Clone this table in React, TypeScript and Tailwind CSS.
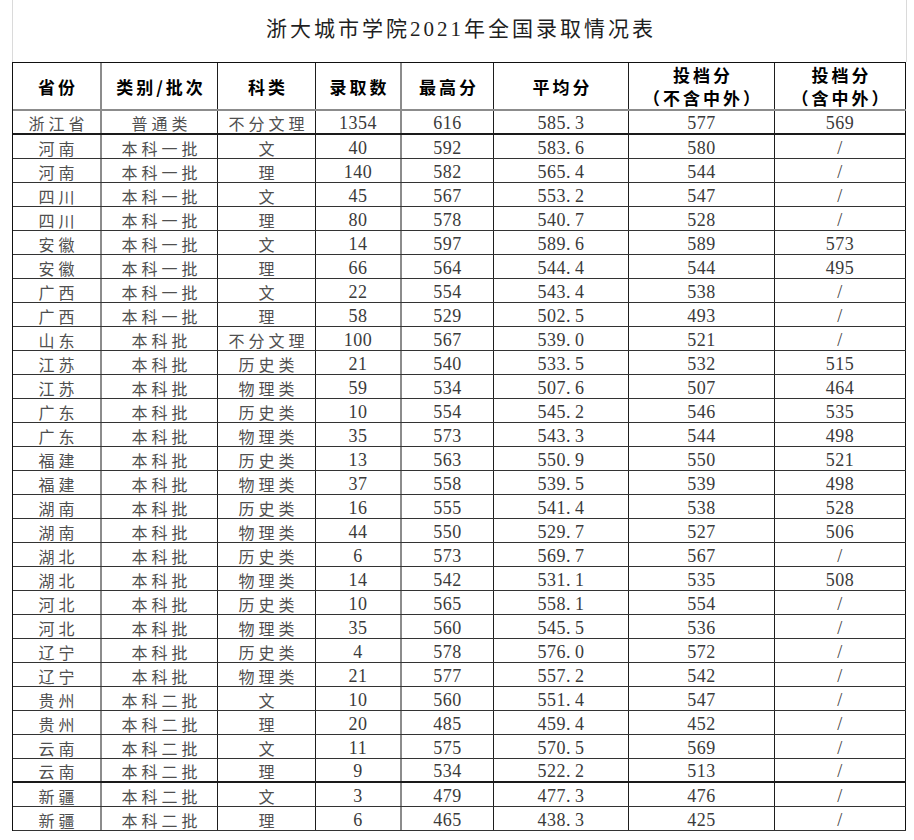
import type { ReactNode } from "react";

type Row = [string, string, string, string, string, string, string, string];

const ROWS: Row[] = [
  ["浙江省", "普通类", "不分文理", "1354", "616", "585.3", "577", "569"],
  ["河南", "本科一批", "文", "40", "592", "583.6", "580", "/"],
  ["河南", "本科一批", "理", "140", "582", "565.4", "544", "/"],
  ["四川", "本科一批", "文", "45", "567", "553.2", "547", "/"],
  ["四川", "本科一批", "理", "80", "578", "540.7", "528", "/"],
  ["安徽", "本科一批", "文", "14", "597", "589.6", "589", "573"],
  ["安徽", "本科一批", "理", "66", "564", "544.4", "544", "495"],
  ["广西", "本科一批", "文", "22", "554", "543.4", "538", "/"],
  ["广西", "本科一批", "理", "58", "529", "502.5", "493", "/"],
  ["山东", "本科批", "不分文理", "100", "567", "539.0", "521", "/"],
  ["江苏", "本科批", "历史类", "21", "540", "533.5", "532", "515"],
  ["江苏", "本科批", "物理类", "59", "534", "507.6", "507", "464"],
  ["广东", "本科批", "历史类", "10", "554", "545.2", "546", "535"],
  ["广东", "本科批", "物理类", "35", "573", "543.3", "544", "498"],
  ["福建", "本科批", "历史类", "13", "563", "550.9", "550", "521"],
  ["福建", "本科批", "物理类", "37", "558", "539.5", "539", "498"],
  ["湖南", "本科批", "历史类", "16", "555", "541.4", "538", "528"],
  ["湖南", "本科批", "物理类", "44", "550", "529.7", "527", "506"],
  ["湖北", "本科批", "历史类", "6", "573", "569.7", "567", "/"],
  ["湖北", "本科批", "物理类", "14", "542", "531.1", "535", "508"],
  ["河北", "本科批", "历史类", "10", "565", "558.1", "554", "/"],
  ["河北", "本科批", "物理类", "35", "560", "545.5", "536", "/"],
  ["辽宁", "本科批", "历史类", "4", "578", "576.0", "572", "/"],
  ["辽宁", "本科批", "物理类", "21", "577", "557.2", "542", "/"],
  ["贵州", "本科二批", "文", "10", "560", "551.4", "547", "/"],
  ["贵州", "本科二批", "理", "20", "485", "459.4", "452", "/"],
  ["云南", "本科二批", "文", "11", "575", "570.5", "569", "/"],
  ["云南", "本科二批", "理", "9", "534", "522.2", "513", "/"],
  ["新疆", "本科二批", "文", "3", "479", "477.3", "476", "/"],
  ["新疆", "本科二批", "理", "6", "465", "438.3", "425", "/"],
];

const GRID = "grid grid-cols-[89px_116px_98px_86px_92px_135px_146px_131px]";

// column dividers: the 1st and 4th print grey and a bit heavier
const COL_BORDER = [
  "border-r-2 border-r-[#8c8c8c]",
  "border-r border-r-[#1e1e1e]",
  "border-r border-r-[#1e1e1e]",
  "border-r-2 border-r-[#8c8c8c]",
  "border-r border-r-[#1e1e1e]",
  "border-r border-r-[#1e1e1e]",
  "border-r border-r-[#1e1e1e]",
  "border-r border-r-[#111]",
];

const CJK = "font-['Noto_Sans_CJK_SC',sans-serif]";
const NUM = "font-['Liberation_Serif','Noto_Sans_CJK_SC',serif]";

function Num({ value }: { value: string }) {
  const [int, dec] = value.split(".");
  if (dec === undefined) return <>{value}</>;
  return (
    <>
      {int}
      <span className="inline-block w-[9px] text-left">.</span>
      {dec}
    </>
  );
}

function HeadCell({ col, children }: { col: number; children: ReactNode }) {
  return (
    <div
      className={`${COL_BORDER[col]} flex flex-col items-center justify-center pl-[3px] text-[17px] font-bold leading-[23px] tracking-[3px] text-black ${CJK}`}
    >
      {children}
    </div>
  );
}

function DataRow({ row, index }: { row: Row; index: number }) {
  const thick = index === 0 || index === 27;
  return (
    <div
      className={`${GRID} h-[24px] ${thick ? "border-b-2 border-b-[#1a1a1a]" : "border-b border-b-[#333]"}`}
    >
      {row.map((cell, col) => {
        const isText = col < 3;
        return (
          <div
            key={col}
            className={`${COL_BORDER[col]} flex items-center justify-center pt-[2px] leading-none ${
              isText
                ? `${CJK} pl-[4px] text-[16px] tracking-[4px] text-[#505050]`
                : `${NUM} text-[18px] tracking-[0.5px] text-[#3a3a3a]`
            }`}
          >
            {isText ? cell : <Num value={cell} />}
          </div>
        );
      })}
    </div>
  );
}

export default function App() {
  return (
    <div className="min-h-[840px] w-[914px] bg-white pl-[12px]">
      <div className="flex h-[62px] w-[895px] items-center justify-center border-x border-x-[#dadada] pb-[4px]">
        <h1
          className={`pl-[3px] text-[21px] font-normal leading-none tracking-[3px] text-[#1f1f1f] ${NUM}`}
        >
          浙大城市学院2021年全国录取情况表
        </h1>
      </div>

      <div className="w-[894px] border-l border-t border-l-[#111] border-t-[#111]">
        <div className={`${GRID} h-[48px] border-b-2 border-b-[#8c8c8c]`}>
          <HeadCell col={0}>省份</HeadCell>
          <HeadCell col={1}>类别/批次</HeadCell>
          <HeadCell col={2}>科类</HeadCell>
          <HeadCell col={3}>录取数</HeadCell>
          <HeadCell col={4}>最高分</HeadCell>
          <HeadCell col={5}>平均分</HeadCell>
          <HeadCell col={6}>
            <span>投档分</span>
            <span>（不含中外）</span>
          </HeadCell>
          <HeadCell col={7}>
            <span>投档分</span>
            <span>（含中外）</span>
          </HeadCell>
        </div>

        {ROWS.map((row, i) => (
          <DataRow key={i} row={row} index={i} />
        ))}
      </div>
    </div>
  );
}
